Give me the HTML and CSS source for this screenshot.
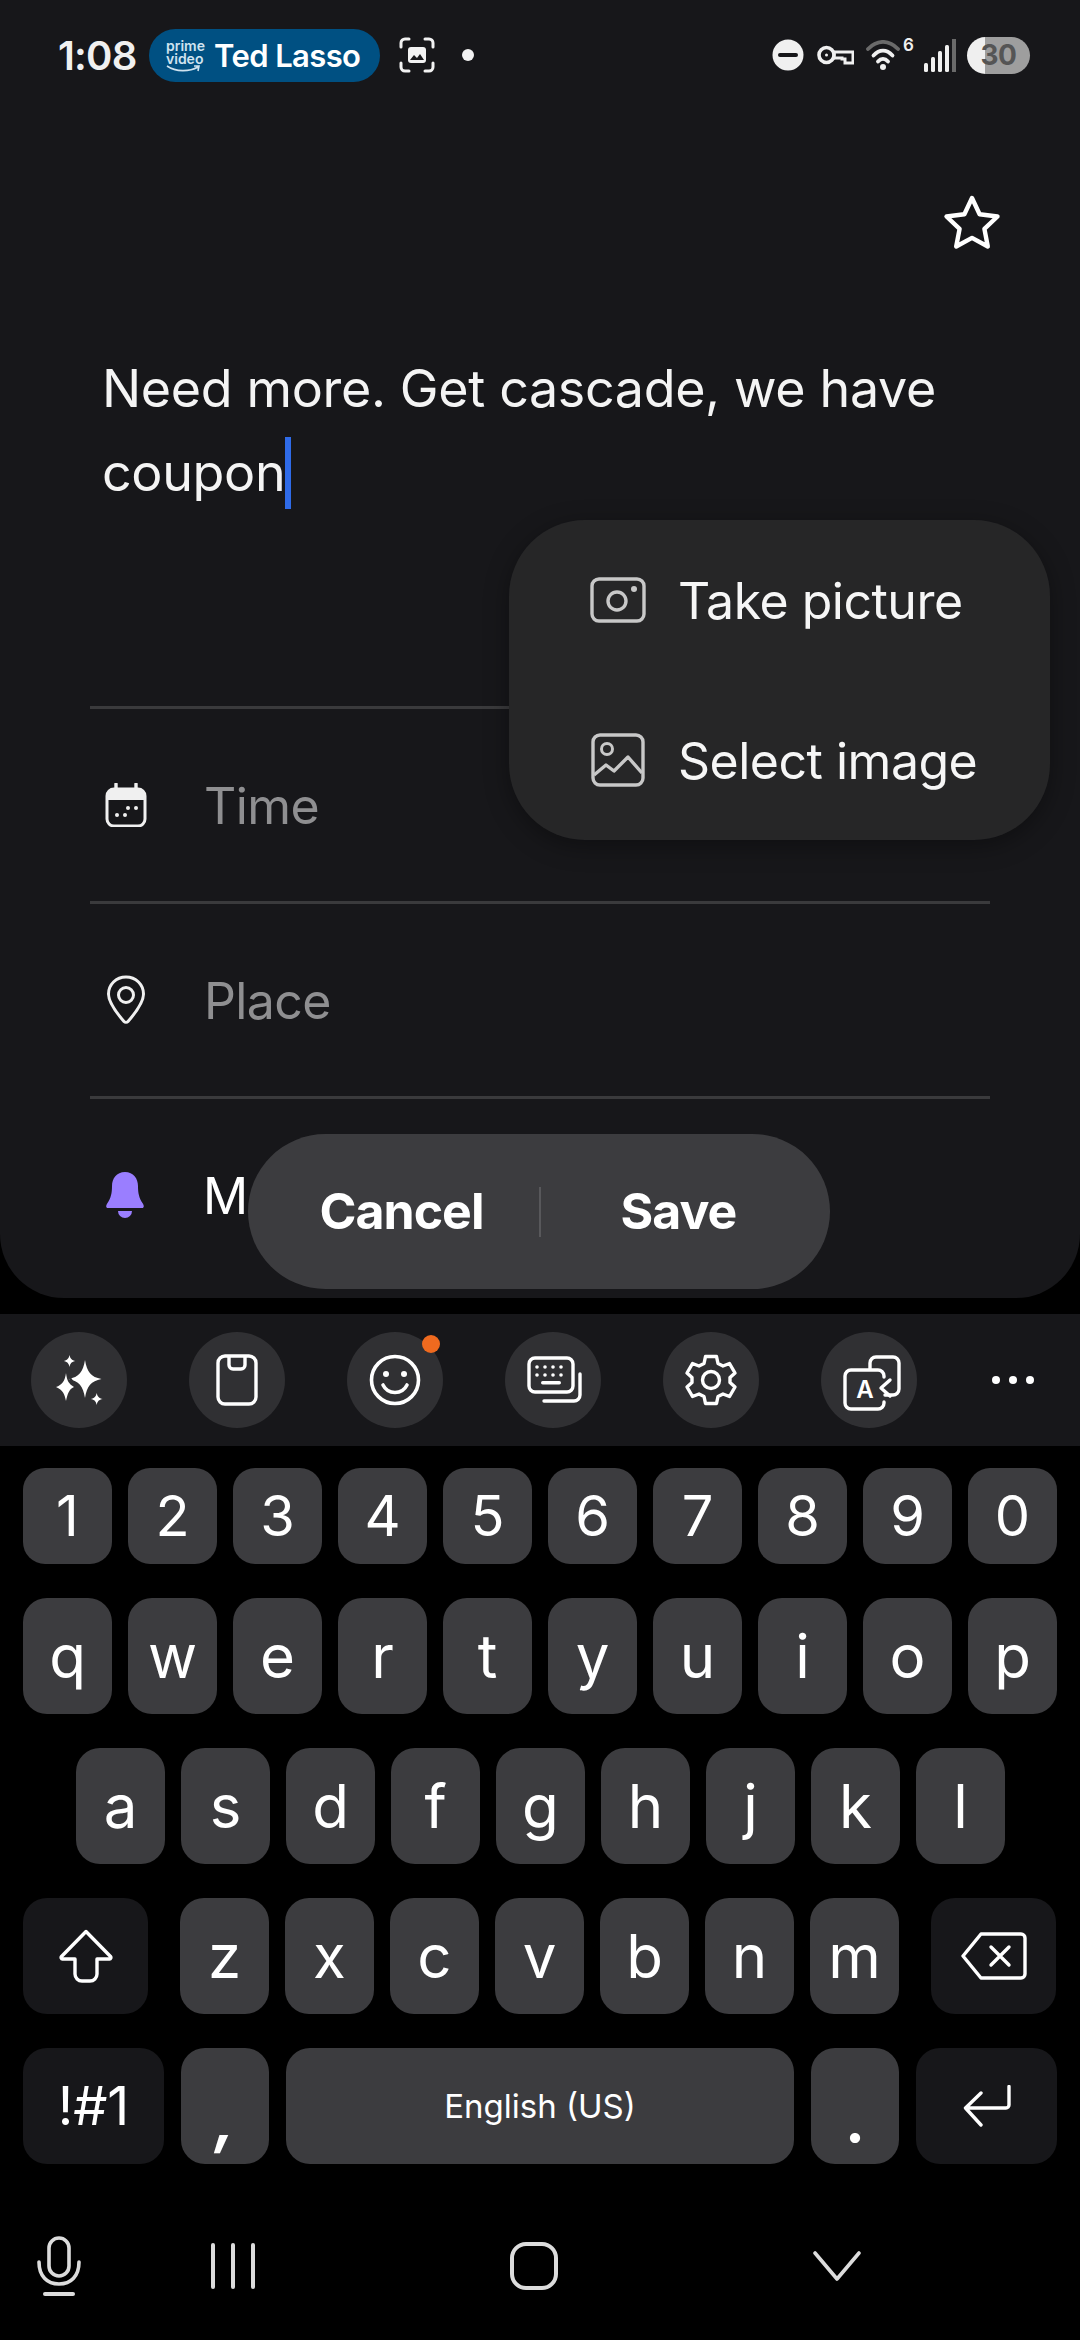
FILE: index.html
```html
<!DOCTYPE html>
<html lang="en">
<head>
<meta charset="utf-8">
<title>Reminder</title>
<link rel="stylesheet" href="styles.css">
</head>
<body>
<div class="screen">
  <section class="panel">
    <header class="status">
      <span class="clock">1:08</span>
      <div class="media-pill">
        <span class="prime">prime<br>video<svg class="smile" viewBox="0 0 34 8"><path d="M1 1c9 6 22 6 31 1M28 1l5 0-1 5" fill="none" stroke="#cfe3f0" stroke-width="1.6"/></svg></span>
        <span class="media-title">Ted Lasso</span>
      </div>
      <svg class="ic-shot" viewBox="0 0 36 36"><g fill="none" stroke="#f2f2f2" stroke-width="3" stroke-linecap="round"><path d="M2 10V6a4 4 0 0 1 4-4h4M26 2h4a4 4 0 0 1 4 4v4M34 26v4a4 4 0 0 1-4 4h-4M10 34H6a4 4 0 0 1-4-4v-4"/></g><rect x="9" y="10" width="18" height="16" rx="3" fill="#f2f2f2"/><path d="M11 23l4-5 3 3 3-4 4 6z" fill="#17171a"/></svg>
      <span class="status-dot"></span>
      <div class="status-right">
        <svg class="ic-dnd" viewBox="0 0 32 32"><circle cx="16" cy="16" r="15.500" fill="#f0f0f0"/><rect x="6" y="14" width="20" height="4" rx="2" fill="#17171a"/></svg>
        <svg class="ic-key" viewBox="0 0 37 20"><circle cx="9.500" cy="10" r="7.500" fill="none" stroke="#f0f0f0" stroke-width="3.600"/><circle cx="9.500" cy="10" r="1.500" fill="#f0f0f0"/><path d="M17 7h19v11h-8v-4h-3v-1h-8z" fill="none" stroke="#f0f0f0" stroke-width="3"/></svg>
        <svg class="ic-wifi" viewBox="0 0 34 30"><g fill="none" stroke-linecap="round" stroke-width="3.800"><path d="M2 9c9-9.500 21-9.500 30 0" stroke="#6a6a6a"/><path d="M7.500 15.500c6-6.500 13-6.500 19 0M12 21.500c3-3.500 7-3.500 10 0" stroke="#f0f0f0"/></g><circle cx="17" cy="27" r="3" fill="#f0f0f0"/></svg>
        <span class="wifi-six">6</span>
        <svg class="ic-signal" viewBox="0 0 32 33"><g fill="#f0f0f0"><rect x="0" y="24" width="4" height="9" rx="1.500"/><rect x="7" y="18" width="4" height="15" rx="1.500"/><rect x="14" y="12" width="4" height="21" rx="1.500"/><rect x="21" y="6" width="4" height="27" rx="1.500"/></g><rect x="28" y="0" width="4" height="33" fill="#6a6a6a"/></svg>
        <div class="battery"><span class="battery-level">30</span></div>
      </div>
    </header>

    <div class="star-row">
      <svg class="ic-star" viewBox="0 0 58 56"><path d="M29 3l7.600 16.200 17.900 2.300-13.100 12.300 3.400 17.700L29 42.900l-15.800 8.600 3.400-17.700L3.500 21.500l17.900-2.300z" fill="none" stroke="#fff" stroke-width="4.400" stroke-linejoin="round"/></svg>
    </div>

    <div class="note">
      <p class="note-text">Need more. Get cascade, we have<br>coupon<span class="caret"></span></p>
    </div>

    <div class="field">
      <svg class="field-icon cal" viewBox="0 0 42 44"><path d="M11 1v6M31 1v6" stroke="#f0f0f0" stroke-width="3.400" stroke-linecap="round"/><rect x="2" y="6" width="38" height="37" rx="7" fill="none" stroke="#f0f0f0" stroke-width="3"/><path d="M2 17v-4a7 7 0 0 1 7-7h24a7 7 0 0 1 7 7v4z" fill="#f0f0f0"/><g fill="#f0f0f0"><circle cx="12" cy="32" r="2"/><circle cx="20" cy="32" r="2"/><circle cx="23" cy="25" r="2"/><circle cx="31" cy="25" r="2"/></g></svg>
      <span class="field-label muted">Time</span>
    </div>
    <div class="field">
      <svg class="field-icon pin" viewBox="0 0 40 50"><path d="M20 2C10 2 2.500 9.800 2.500 19c0 9 9 20 15.500 27.500a2.800 2.800 0 0 0 4 0C28.500 39 37.500 28 37.500 19 37.500 9.800 30 2 20 2z" fill="none" stroke="#f0f0f0" stroke-width="3"/><circle cx="20" cy="20" r="7.500" fill="none" stroke="#f0f0f0" stroke-width="3"/></svg>
      <span class="field-label muted">Place</span>
    </div>
    <div class="field">
      <svg class="field-icon bell" viewBox="0 0 40 46"><path d="M20 0c-8.500 0-13 6.500-13 14 0 7-1 12-4.800 17.500C1 33.300 0.500 36 3 36h34c2.500 0 2-2.700 0.800-4.500C34 26 33 21 33 14 33 6.500 28.500 0 20 0z" fill="#9a7eff"/><path d="M13 39h14a7 7 0 0 1-14 0z" fill="#9a7eff"/></svg>
      <span class="field-label">M</span>
    </div>

    <div class="action-pill">
      <span class="action first">Cancel</span>
      <span class="action-sep"></span>
      <span class="action second">Save</span>
    </div>

    <div class="menu">
      <div class="menu-item">
        <svg class="menu-icon" viewBox="0 0 56 46"><rect x="2" y="2" width="52" height="42" rx="7" fill="none" stroke="#c8c8c8" stroke-width="3.400"/><circle cx="27" cy="24" r="9" fill="none" stroke="#c8c8c8" stroke-width="3.400"/><circle cx="44" cy="12" r="3" fill="#c8c8c8"/></svg>
        <span>Take picture</span>
      </div>
      <div class="menu-item">
        <svg class="menu-icon" viewBox="0 0 56 54"><rect x="3" y="2" width="50" height="50" rx="7" fill="none" stroke="#c8c8c8" stroke-width="3.400"/><circle cx="17" cy="16" r="5.500" fill="none" stroke="#c8c8c8" stroke-width="3"/><path d="M4 42l12-10 8 6 14-14 14 16" fill="none" stroke="#c8c8c8" stroke-width="3.400" stroke-linejoin="round"/></svg>
        <span>Select image</span>
      </div>
    </div>
  </section>

  <section class="toolbar">
    <div class="tool">
      <svg viewBox="0 0 96 96"><path d="M54 28c2 12 6 17 16.500 19C60 49 56 54 54 66c-2-12-6-17-16.500-19C48 45 52 40 54 28z" fill="#fff"/><path d="M38.500 23c.8 3.800 2.200 5.200 6 6-3.800.8-5.200 2.200-6 6-.8-3.800-2.200-5.200-6-6 3.800-.8 5.200-2.200 6-6zM65.700 61c.8 3.800 2.200 5.200 6 6-3.800.8-5.200 2.200-6 6-.8-3.800-2.200-5.200-6-6 3.800-.8 5.200-2.200 6-6z" fill="#fff"/><path d="M35 41c1 8 3 11 8 14-5 2-6.500 7-8 14-1.500-7-3-11-10-14 6-2 9-6 10-14z" fill="#fff"/><path d="M37 38c-2 5 3 9 8 16" fill="none" stroke="#303033" stroke-width="2"/></svg>
    </div>
    <div class="tool">
      <svg viewBox="0 0 96 96"><rect x="29" y="24" width="38" height="48" rx="7" fill="none" stroke="#fff" stroke-width="3.400"/><path d="M40 24v9a4 4 0 0 0 4 4h8a4 4 0 0 0 4-4v-9" fill="none" stroke="#fff" stroke-width="3.400"/></svg>
    </div>
    <div class="tool">
      <svg viewBox="0 0 96 96"><circle cx="48" cy="48" r="23.500" fill="none" stroke="#fff" stroke-width="3.600"/><circle cx="39" cy="42" r="3" fill="#fff"/><circle cx="57" cy="42" r="3" fill="#fff"/><path d="M36 53c5 10 19 10 24 0" fill="none" stroke="#fff" stroke-width="3.600" stroke-linecap="round"/></svg>
      <span class="badge"></span>
    </div>
    <div class="tool">
      <svg viewBox="0 0 96 96"><rect x="24" y="26" width="44" height="34" rx="6" fill="none" stroke="#fff" stroke-width="3.400"/><g fill="#fff"><circle cx="32" cy="35" r="1.800"/><circle cx="40" cy="35" r="1.800"/><circle cx="48" cy="35" r="1.800"/><circle cx="56" cy="35" r="1.800"/><circle cx="32" cy="43" r="1.800"/><circle cx="40" cy="43" r="1.800"/><circle cx="48" cy="43" r="1.800"/><circle cx="56" cy="43" r="1.800"/><rect x="36" y="49" width="20" height="3.400" rx="1.700"/></g><path d="M39 69h30a6 6 0 0 0 6-6V42" fill="none" stroke="#fff" stroke-width="3.400" stroke-linecap="round"/></svg>
    </div>
    <div class="tool">
      <svg viewBox="0 0 96 96"><path d="M42.500 24.500h11l1.500 7 5 2.500 6.500-2.500 5.500 9.500-5 4.500v5l5 4.500-5.500 9.500-6.500-2.500-5 2.500-1.500 7h-11l-1.500-7-5-2.500-6.500 2.500-5.500-9.500 5-4.500v-5l-5-4.500 5.500-9.500 6.500 2.500 5-2.500z" fill="none" stroke="#fff" stroke-width="3.400" stroke-linejoin="round"/><circle cx="48" cy="48" r="8.500" fill="none" stroke="#fff" stroke-width="3.400"/></svg>
    </div>
    <div class="tool">
      <svg viewBox="0 0 96 96"><path d="M49 37v-6a6 6 0 0 1 6-6h17a6 6 0 0 1 6 6v26a6 6 0 0 1-6 6H64" fill="none" stroke="#fff" stroke-width="3.400" stroke-linecap="round"/><path d="M63 45v-1a6 6 0 0 0-6-6H30a6 6 0 0 0-6 6v27a6 6 0 0 0 6 6h27a6 6 0 0 0 6-6v-1" fill="none" stroke="#fff" stroke-width="3.400" stroke-linecap="round"/><text x="44" y="66" class="tr-a">A</text><path d="M69 48l-9 8 9 8" fill="none" stroke="#fff" stroke-width="3.400" stroke-linecap="round" stroke-linejoin="round"/></svg>
    </div>
    <div class="more"><span></span><span></span><span></span></div>
  </section>

  <section class="keyboard">
    <div class="row">
      <button class="key num">1</button><button class="key num">2</button><button class="key num">3</button><button class="key num">4</button><button class="key num">5</button><button class="key num">6</button><button class="key num">7</button><button class="key num">8</button><button class="key num">9</button><button class="key num">0</button>
    </div>
    <div class="row">
      <button class="key">q</button><button class="key">w</button><button class="key">e</button><button class="key">r</button><button class="key">t</button><button class="key">y</button><button class="key">u</button><button class="key">i</button><button class="key">o</button><button class="key">p</button>
    </div>
    <div class="row home-row">
      <button class="key">a</button><button class="key">s</button><button class="key">d</button><button class="key">f</button><button class="key">g</button><button class="key">h</button><button class="key">j</button><button class="key">k</button><button class="key">l</button>
    </div>
    <div class="row lower-row">
      <button class="key func shift"><svg class="func-ic" viewBox="0 0 54 54"><path d="M27 2.500L2.500 27.500a1.500 1.500 0 0 0 1 2.500H16v15a7 7 0 0 0 7 7h8a7 7 0 0 0 7-7V30h12.500a1.500 1.500 0 0 0 1-2.500z" fill="none" stroke="#fff" stroke-width="3.400" stroke-linejoin="round"/></svg></button>
      <button class="key">z</button><button class="key">x</button><button class="key">c</button><button class="key">v</button><button class="key">b</button><button class="key">n</button><button class="key">m</button>
      <button class="key func back"><svg class="back-ic" viewBox="0 0 66 48"><path d="M20 2h40a4 4 0 0 1 4 4v36a4 4 0 0 1-4 4H20L2 24z" fill="none" stroke="#fff" stroke-width="3.400" stroke-linejoin="round"/><path d="M30 15l18 18M48 15L30 33" stroke="#fff" stroke-width="3.400" stroke-linecap="round"/></svg></button>
    </div>
    <div class="row bottom-row">
      <button class="key func sym">!#1</button>
      <button class="key punct comma">,</button>
      <button class="key space">English (US)</button>
      <button class="key punct period">.</button>
      <button class="key func enter"><svg class="enter-ic" viewBox="0 0 48 42"><path d="M46 1.500V20a3 3 0 0 1-3 3H3M18 8L2.500 23 18 40" fill="none" stroke="#fff" stroke-width="3.400" stroke-linecap="round" stroke-linejoin="round"/></svg></button>
    </div>
  </section>

  <nav class="nav">
    <svg class="nav-mic" viewBox="0 0 44 60"><rect x="12" y="2" width="20" height="38" rx="10" fill="none" stroke="#dcdcdc" stroke-width="3.600"/><path d="M2 26c0 14 8 22 20 22s20-8 20-22" fill="none" stroke="#dcdcdc" stroke-width="3.600" stroke-linecap="round"/><rect x="6" y="56" width="32" height="4" rx="2" fill="#dcdcdc"/></svg>
    <div class="nav-bars"><span></span><span></span><span></span></div>
    <span class="nav-home"></span>
    <svg class="nav-chev" viewBox="0 0 48 30"><path d="M2 2l22 26L46 2" fill="none" stroke="#dcdcdc" stroke-width="3.600" stroke-linecap="round" stroke-linejoin="round"/></svg>
  </nav>
</div>
</body>
</html>
```
FILE: styles.css
```css
* { box-sizing: border-box; }
html, body { margin: 0; padding: 0; background: #000; }
body { font-family: Inter, Roboto, "Liberation Sans", sans-serif; color: #fff; }
.screen { width: 1080px; height: 2340px; overflow: hidden; display: flex; flex-direction: column; background: #000; }

.panel { position: relative; height: 1298px; flex: none; background: #17171a; border-radius: 0 0 64px 64px; overflow: hidden; }

.status { height: 110px; display: flex; align-items: center; padding: 0 50px 0 58px; position: relative; }
.clock { font-size: 40px; font-weight: 600; color: #f0f0f0; width: 91px; letter-spacing: -.8px; }
.media-pill { width: 231px; height: 53px; background: #005082; border-radius: 27px; display: flex; align-items: center; padding-left: 17px; gap: 14px; }
.prime { font-size: 14px; line-height: 13px; font-weight: 600; color: #cfe3f0; width: 34px; text-align: center; display: block; padding-top: 2px; }
.smile { display: block; width: 34px; height: 8px; }
.media-title { font-size: 31px; font-weight: 600; color: #fff; letter-spacing: -.6px; }
.ic-shot { width: 36px; height: 36px; margin-left: 19px; }
.status-dot { width: 12px; height: 12px; border-radius: 50%; background: #f2f2f2; margin-left: 27px; }
.status-right { margin-left: auto; display: flex; align-items: center; position: relative; height: 40px; }
.ic-dnd { width: 32px; height: 32px; }
.ic-key { width: 37px; height: 20px; margin-left: 13px; }
.ic-wifi { width: 34px; height: 30px; margin-left: 12px; }
.wifi-six { font-size: 17px; font-weight: 600; color: #f0f0f0; width: 14px; margin-left: 3px; align-self: flex-start; line-height: 20px; }
.ic-signal { width: 32px; height: 33px; margin-left: 7px; }
.battery { width: 63px; height: 37px; margin-left: 11px; border-radius: 19px; background: linear-gradient(90deg, #efefef 0 18px, #9e9e9e 18px); display: flex; align-items: center; justify-content: center; }
.battery-level { font-size: 28px; font-weight: 700; color: #555; letter-spacing: -.5px; }

.star-row { display: flex; justify-content: flex-end; padding: 85px 79px 0 0; }
.ic-star { width: 58px; height: 56px; display: block; }

.note { height: 455px; margin: 0 90px; padding: 96px 0 0 12px; }
.note-text { margin: 0; font-size: 52px; line-height: 84px; color: #f4f4f4; white-space: nowrap; letter-spacing: -.35px; }
.caret { display: inline-block; width: 6px; height: 72px; margin-left: 0; background: #2f6be8; vertical-align: -18px; }

.field { height: 195px; margin: 0 90px; display: flex; align-items: center; border-top: 3px solid #3a3a3c; }
.field-icon { flex: none; display: block; }
.field-label { font-size: 50px; color: #fff; letter-spacing: -.6px; padding-top: 2px; }
.muted { color: #8f8f91; }
.cal { width: 42px; height: 44px; margin: 0 57px 0 15px; }
.pin { width: 40px; height: 50px; margin: 0 58px 0 16px; }
.bell { width: 40px; height: 46px; margin: 0 58px 0 15px; }

.action-pill { position: absolute; left: 248px; top: 1134px; width: 582px; height: 155px; background: #3c3c3f; border-radius: 78px; display: flex; align-items: center; font-size: 50px; font-weight: 700; letter-spacing: -1px; }
.action { flex: 1; text-align: center; padding-bottom: 2px; }
.action.first { padding-left: 16px; }
.action.second { padding-right: 14px; }
.action-sep { width: 2px; height: 50px; background: #58585b; flex: none; }

.menu { position: absolute; left: 509px; top: 520px; width: 541px; height: 320px; background: #262627; border-radius: 76px; box-shadow: 0 6px 24px rgba(0,0,0,.35); padding: 0 0 0 81px; display: flex; flex-direction: column; }
.menu-item { flex: 1; display: flex; align-items: center; font-size: 50px; color: #f6f6f6; gap: 32px; letter-spacing: -.5px; }
.menu-item span { padding-top: 2px; }
.menu-icon { width: 56px; flex: none; }

.toolbar { height: 132px; flex: none; margin-top: 16px; background: #17171a; display: flex; align-items: center; padding-left: 31px; gap: 62px; }
.tool { width: 96px; height: 96px; border-radius: 50%; background: #303033; flex: none; position: relative; }
.tool svg { width: 96px; height: 96px; display: block; }
.tr-a { font-size: 24px; font-weight: 600; fill: #fff; text-anchor: middle; }
.badge { position: absolute; width: 18px; height: 18px; border-radius: 50%; background: #ef6a1f; left: 75px; top: 3px; }
.more { width: 68px; display: flex; justify-content: space-between; padding: 0 13px; }
.more span { width: 8px; height: 8px; border-radius: 50%; background: #fff; }

.keyboard { flex: none; padding: 22px 23px 0; display: flex; flex-direction: column; gap: 34px; }
.row { display: flex; gap: 16px; }
.key { flex: none; width: 89px; height: 116px; border: 0; padding: 0; margin: 0; background: #3c3c3f; border-radius: 24px; color: #fff; font-family: Inter, Roboto, sans-serif; font-size: 60px; font-weight: 400; line-height: 1; display: flex; align-items: center; justify-content: center; }
.key.num { height: 96px; font-size: 56px; border-radius: 22px; }
.home-row { padding-left: 53px; }
.key.func { background: #17171a; }
.shift { width: 125px; margin-right: 16px; }
.back { width: 125px; margin-left: 16px; }
.func-ic { width: 54px; height: 54px; }
.back-ic { width: 66px; height: 48px; }
.enter-ic { width: 48px; height: 42px; }
.bottom-row { gap: 17px; }
.key.sym { width: 141px; font-size: 54px; }
.punct { width: 88px; }
.comma { align-items: flex-end; font-weight: 700; font-style: italic; padding-bottom: 14px; }
.period { align-items: flex-end; padding-bottom: 14px; font-weight: 700; }
.key.space { width: 508px; font-size: 33px; }
.key.enter { width: 141px; }

.nav { flex: 1; display: flex; align-items: center; padding: 28px 0 0 37px; }
.nav-mic { width: 44px; height: 60px; }
.nav-bars { width: 44px; height: 46px; margin-left: 130px; display: flex; justify-content: space-between; }
.nav-bars span { width: 4px; background: #dcdcdc; border-radius: 2px; }
.nav-home { width: 48px; height: 48px; margin-left: 255px; border: 4px solid #dcdcdc; border-radius: 16px; }
.nav-chev { width: 48px; height: 30px; margin-left: 255px; }
```
